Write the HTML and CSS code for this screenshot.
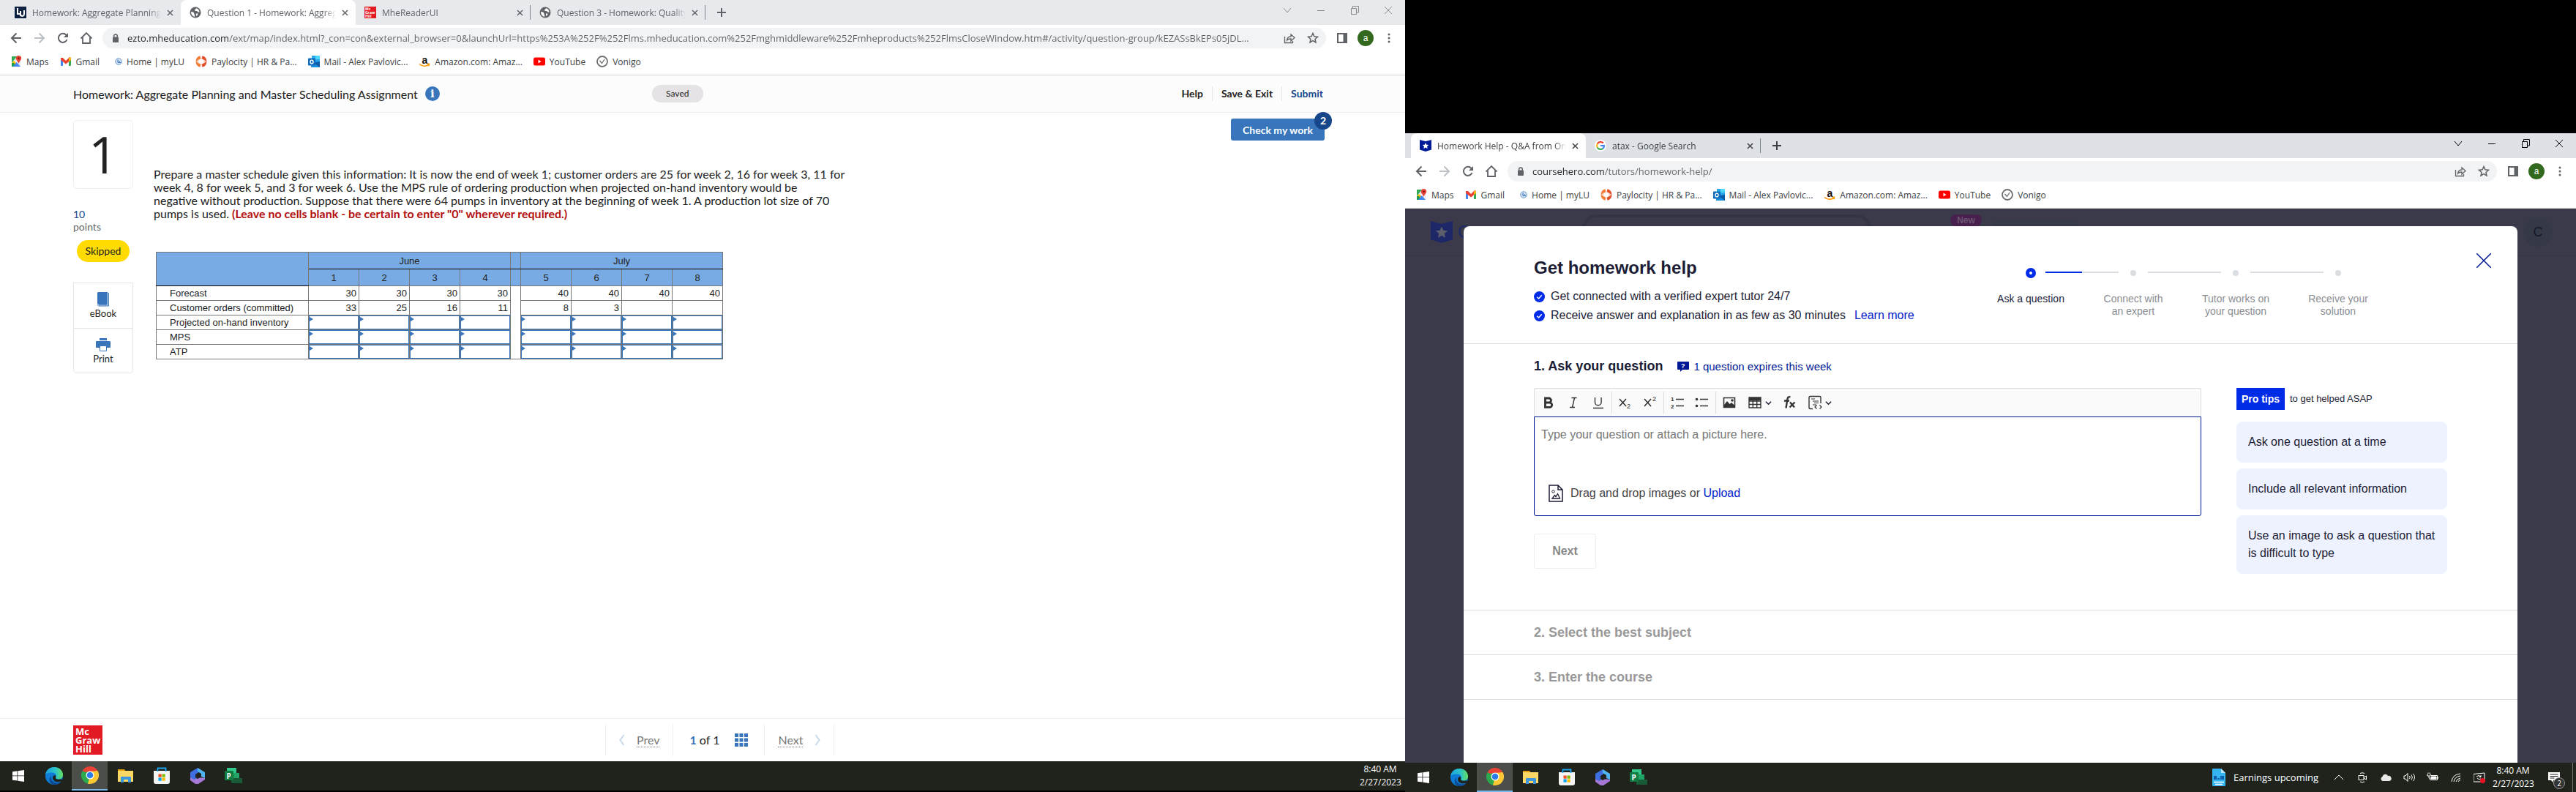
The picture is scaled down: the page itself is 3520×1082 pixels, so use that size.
FILE: index.html
```html
<!DOCTYPE html>
<html lang="en">

<head>
    <meta charset="utf-8">
    <meta name="viewport" content="width=device-width, initial-scale=1.0">
    <title>Desktop</title>
    <link rel="stylesheet" href="styles.css">
</head>

<body>
    <!-- icons used by both screens -->
    <svg class="sprite" aria-hidden="true">
        <symbol id="globe" viewBox="0 0 16 16">
            <circle cx="8" cy="8" r="7.5" fill="#5f6368" />
            <path d="M2.2 7c2.5.2 4.200 1.200 4.200 2.700 0 1.300.8 1.300.8 2.500v1.600C4.300 13.600 1.800 11 2.200 7zM9 2.200c-.2 1.600-1.800 1.200-2 2.600-.1 1.200 1.300 1.200 2.700 1.200 1.200 0 .9 1.600 2.200 1.600h1.700C13.400 4.800 11.500 2.600 9 2.200zM9 9.500h2.500l-.6 2.600-1.900.6z" fill="#fff" />
        </symbol>
        <symbol id="shield" viewBox="0 0 16 16">
            <path d="M0 0l8 2 8-2v13.500L8 16l-8-2.500z" />
            <path d="M8 4l1.300 2.800 3 .3-2.300 2 .7 3L8 10.500l-2.700 1.600.7-3-2.300-2 3-.3z" fill="currentColor" />
        </symbol>
        <symbol id="google" viewBox="0 0 16 16">
            <circle cx="8" cy="8" r="8" fill="#fff" />
            <g fill="none" stroke-width="2.200">
                <path d="M11.800 4.500A5 5 0 0 0 3.700 5.500" stroke="#ea4335" />
                <path d="M3.700 5.500a5 5 0 0 0 0 5" stroke="#fbbc05" />
                <path d="M3.700 10.500a5 5 0 0 0 7.600 1.300" stroke="#34a853" />
                <path d="M11.300 11.800A5 5 0 0 0 13 8H8" stroke="#4285f4" />
            </g>
        </symbol>
        <symbol id="close" viewBox="0 0 10 10">
            <path d="M1 1l8 8M9 1L1 9" fill="none" stroke="currentColor" stroke-width="1.600" />
        </symbol>
        <symbol id="plus" viewBox="0 0 12 12">
            <path d="M6 0v12M0 6h12" fill="none" stroke="currentColor" stroke-width="2" />
        </symbol>
        <symbol id="win-down" viewBox="0 0 12 12">
            <path d="M1 3l5 6 5-6" fill="none" stroke="currentColor" />
        </symbol>
        <symbol id="win-min" viewBox="0 0 12 12">
            <path d="M1 6.500h10" fill="none" stroke="currentColor" />
        </symbol>
        <symbol id="win-max" viewBox="0 0 12 12">
            <path d="M1.500 3.500h7v8h-7zM3.500 3V.5h8v8.500H9" fill="none" stroke="currentColor" />
        </symbol>
        <symbol id="win-close" viewBox="0 0 12 12">
            <path d="M1 1l10 10M11 1L1 11" fill="none" stroke="currentColor" />
        </symbol>
        <symbol id="back" viewBox="0 0 16 16">
            <path d="M15 8H2M8.500 1.500L2 8l6.500 6.500" fill="none" stroke="currentColor" stroke-width="2" />
        </symbol>
        <symbol id="forward" viewBox="0 0 16 16">
            <path d="M1 8h13M7.500 1.500L14 8l-6.500 6.500" fill="none" stroke="currentColor" stroke-width="2" />
        </symbol>
        <symbol id="reload" viewBox="0 0 16 16">
            <path d="M13.500 10A6 6 0 1 1 12.400 3.900L13.500 5" fill="none" stroke="currentColor" stroke-width="2" />
            <path d="M15 1v6H9z" fill="currentColor" />
        </symbol>
        <symbol id="home" viewBox="0 0 16 16">
            <path d="M.5 8.500L8 1l7.500 7.500M3 7v8h10V7" fill="none" stroke="currentColor" stroke-width="1.800" />
        </symbol>
        <symbol id="lock" viewBox="0 0 10 12">
            <rect x="1" y="4.500" width="8" height="7.500" rx="1" fill="currentColor" />
            <path d="M2.700 5V3.300a2.300 2.300 0 0 1 4.600 0V5" fill="none" stroke="currentColor" stroke-width="1.500" />
        </symbol>
        <symbol id="share" viewBox="0 0 16 16">
            <path d="M1.500 6v8.500h11V12M4.500 11c.4-3.500 2.500-5 5.500-5V3l5 4.500-5 4.500V9c-2.500 0-4 .3-5.500 2z" fill="none" stroke="currentColor" stroke-width="1.300" />
        </symbol>
        <symbol id="star" viewBox="0 0 16 16">
            <path d="M8 1.500l1.900 4.300 4.600.5L11 9.400l1 4.600-4-2.400L4 14l1-4.600-3.500-3.100 4.600-.5z" fill="none" stroke="currentColor" stroke-width="1.500" />
        </symbol>
        <symbol id="panel" viewBox="0 0 14 14">
            <path d="M0 0h14v14H0z" fill="currentColor" />
            <path d="M2 2h6.500v10H2z" fill="#fff" />
        </symbol>
        <symbol id="dots" viewBox="0 0 4 14">
            <g fill="currentColor">
                <circle cx="2" cy="2" r="1.500" />
                <circle cx="2" cy="7" r="1.500" />
                <circle cx="2" cy="12" r="1.500" />
            </g>
        </symbol>
        <symbol id="maps" viewBox="0 0 16 16">
            <path d="M2 1h12v14H2z" fill="#e8eaed" />
            <path d="M2 1h7L2 10z" fill="#34a853" />
            <path d="M2 10l3-3 8 8H6z" fill="#fbbc04" />
            <path d="M2 10v5h6l-3-5z" fill="#1a9c4b" />
            <path d="M8.500 9l5.500 6H4z" fill="#4285f4" />
            <path d="M11.500 0a3.700 3.700 0 0 1 3.700 3.700c0 2.500-2.700 3.500-3.700 7.300-1-3.800-3.700-4.800-3.700-7.300A3.700 3.700 0 0 1 11.500 0z" fill="#ea4335" />
            <circle cx="11.500" cy="3.700" r="1.300" fill="#811b12" />
        </symbol>
        <symbol id="gmail" viewBox="0 0 16 16">
            <path d="M1 3h3v11H2a1 1 0 0 1-1-1z" fill="#4285f4" />
            <path d="M12 3h3v10a1 1 0 0 1-1 1h-2z" fill="#34a853" />
            <path d="M1 3l3 0 4 4 4-4 1-1 2 1v3l-7 5.500L1 6z" fill="#ea4335" />
            <path d="M12 3.200L15 2.800V6l-3 2.500z" fill="#fbbc04" />
        </symbol>
        <symbol id="mylu" viewBox="0 0 16 16">
            <circle cx="11" cy="8" r="4.300" fill="#d5e3f3" stroke="#6b98cc" />
            <path d="M10 5.500v4h1.500M12 7v2.500h2" fill="none" stroke="#2c6dba" />
        </symbol>
        <symbol id="paylocity" viewBox="0 0 16 16">
            <g fill="none" stroke-width="4">
                <path d="M7 2.200a6 6 0 0 0 0 11.600" stroke="#f27c3a" />
                <path d="M9 2.200a6 6 0 0 1 0 11.600" stroke="#e2502a" />
            </g>
            <path d="M1 8l4-3v6zM15 8l-4-3v6z" fill="#fff" opacity=".7" />
        </symbol>
        <symbol id="outlook" viewBox="0 0 16 16">
            <path d="M5 0h11v9H5z" fill="#28a8ea" />
            <path d="M10 0h6v5h-6z" fill="#50d9ff" />
            <path d="M4 8h12v8H4z" fill="#1490df" />
            <path d="M16 8v8L8 10z" fill="#0a5ba6" />
            <rect y="3.500" width="10" height="10" rx="1" fill="#0f6cbd" />
            <ellipse cx="5" cy="8.500" rx="2" ry="2.400" fill="none" stroke="#fff" stroke-width="1.400" />
        </symbol>
        <symbol id="smile" viewBox="0 0 16 16">
            <path d="M1 11.500c4 3.500 9.500 3.500 13 .8M11.500 11.500l3-.2-.5 3" fill="none" stroke="#ff9900" stroke-width="1.500" />
        </symbol>
        <symbol id="youtube" viewBox="0 0 16 16">
            <rect y="2.500" width="16" height="11" rx="2.500" fill="#f00" />
            <path d="M6.500 5.500v5l4-2.500z" fill="#fff" />
        </symbol>
        <symbol id="vonigo" viewBox="0 0 16 16">
            <circle cx="8" cy="8" r="7" fill="#fff" stroke="#6d7073" stroke-width="1.800" />
            <path d="M4.500 7l3 3.500L11 5" fill="none" stroke="#6d7073" stroke-width="1.300" />
        </symbol>
        <symbol id="windows" viewBox="0 0 16 16">
            <path d="M0 2.200l6.500-.9v6.200H0zM7.300 1.200L16 0v7.500H7.300zM0 8.300h6.500v6.300L0 13.700zM7.300 8.300H16V16l-8.700-1.200z" fill="#fff" />
        </symbol>
        <symbol id="edge" viewBox="0 0 24 24">
            <defs>
                <linearGradient id="edge-top" x1="0" x2="1">
                    <stop offset="0" stop-color="#1ba1e2" />
                    <stop offset=".6" stop-color="#2fc6c4" />
                    <stop offset="1" stop-color="#66e05a" />
                </linearGradient>
            </defs>
            <circle cx="12" cy="12" r="12" fill="#0e7cd4" />
            <path d="M.2 10C1 4 6 0 12 0c7 0 12 4.800 12 10.500 0 4-3 6-6 6-3.500 0-4.500-1.500-3.800-2.500 1.600-2.500.3-6-4.200-6.500-4-.4-8 .5-9.800 2.500z" fill="url(#edge-top)" />
            <path d="M8 12c-1.500 6 3 9.500 8 9.500 2.500 0 4.500-.8 6-2.500-3 5-9 6-12.500 4.500C5 21.500 4.500 15 8 12z" fill="#0c4a94" />
            <path d="M14.200 14c-.9 2.300 3 3.500 7 2.200l2.800 1.500-3 2c-6 2-11-1-11-5 0-1.500 1-3 2.200-3.700 2 0 2.500 1.500 2 3z" fill="#1f2320" />
        </symbol>
        <symbol id="chrome" viewBox="0 0 24 24">
            <path d="M12 12L1.600 6A12 12 0 0 1 22.400 6z" fill="#ea4335" />
            <path d="M12 12L1.600 6A12 12 0 0 0 12 24l5.200-9z" fill="#2da94f" />
            <path d="M12 12L12 24A12 12 0 0 0 22.400 6H12z" fill="#fcc934" />
            <path d="M12 12l5.200 3L12 24H9z" fill="#fcc934" />
            <path d="M12 6.500L3 8.500l4 6z" fill="#2da94f" />
            <path d="M1.600 6h20.800L12 7z" fill="#ea4335" />
            <circle cx="12" cy="12" r="5.500" fill="#fff" />
            <circle cx="12" cy="12" r="4.300" fill="#2b7de9" />
        </symbol>
        <symbol id="folder" viewBox="0 0 24 24">
            <path d="M1 3h9l2 3H1z" fill="#e3a008" />
            <path d="M1 5h21v15H1z" fill="#fbd765" />
            <path d="M5 21v-7a1 1 0 0 1 1-1h12a1 1 0 0 1 1 1v7h-4v-4H9v4z" fill="#3e97dd" />
        </symbol>
        <symbol id="store" viewBox="0 0 24 24">
            <path d="M1 5h22v15a3 3 0 0 1-3 3H4a3 3 0 0 1-3-3z" fill="#f4f4f4" />
            <path d="M7.500 9.500h4.200v4.200H7.500z" fill="#f25022" />
            <path d="M12.500 9.500h4.200v4.200h-4.200z" fill="#7fba00" />
            <path d="M7.500 14.500h4.200v4.200H7.500z" fill="#00a4ef" />
            <path d="M12.500 14.500h4.200v4.200h-4.200z" fill="#ffb900" />
            <path d="M6.500 6V1.500h11V6" fill="none" stroke="#1ba8f0" stroke-width="1.800" />
        </symbol>
        <symbol id="m365" viewBox="0 0 24 24">
            <path d="M12 1l5 3-5 4v6l-5 4-5-4V7z" fill="#3f6ee0" />
            <path d="M12 1l10 6v8l-5-2V9l-5-3z" fill="#52b4ee" />
            <path d="M2 14l5 3 6-3 9 1v2l-9 6H9l-7-5z" fill="#a678d8" />
            <path d="M12 8l4 3v3l-4 2-3-2v-4z" fill="#1f2320" />
        </symbol>
        <symbol id="project" viewBox="0 0 24 24">
            <path d="M3 1h13v8H3z" fill="#31c78b" />
            <path d="M11 8h9v8h-9z" fill="#21a366" />
            <path d="M9 15h15v7H9z" fill="#185c37" />
            <rect y="5" width="12" height="13" rx="1" fill="#107c41" />
        </symbol>
        <symbol id="check" viewBox="0 0 16 16">
            <circle cx="8" cy="8" r="8" fill="#002be7" />
            <path d="M4.500 8.300l2.500 2.300 4.500-5" fill="none" stroke="#fff" stroke-width="1.600" />
        </symbol>
        <symbol id="chevron" viewBox="0 0 10 10">
            <path d="M1 3l4 4 4-4" fill="none" stroke="currentColor" stroke-width="1.600" />
        </symbol>
    </svg>

    <section class="screen screen-left">
        <div class="tabs">
            <div class="tab">
                <svg class="icon" viewBox="0 0 16 16">
                    <path d="M0 0h16v16H0z" fill="#0d2240" />
                    <path d="M4 2v8h4M8 6v6c4 2 5 0 5-2V5" fill="none" stroke="#fff" stroke-width="2" />
                </svg>
                <span class="tab-title">Homework: Aggregate Planning and</span>
                <button class="tab-close" aria-label="Close tab"><svg><use href="#close" /></svg></button>
            </div>
            <div class="tab active">
                <svg class="icon"><use href="#globe" /></svg>
                <span class="tab-title">Question 1 - Homework: Aggregate</span>
                <button class="tab-close" aria-label="Close tab"><svg><use href="#close" /></svg></button>
            </div>
            <div class="tab line">
                <svg class="icon" viewBox="0 0 16 16">
                    <path d="M0 0h16v16H0z" fill="#e21a23" />
                    <g fill="#fff" font-size="5" font-weight="700">
                        <text x="1" y="5">Mc</text>
                        <text x="1" y="10">Graw</text>
                        <text x="1" y="15">Hill</text>
                    </g>
                </svg>
                <span class="tab-title">MheReaderUI</span>
                <button class="tab-close" aria-label="Close tab"><svg><use href="#close" /></svg></button>
            </div>
            <div class="tab line">
                <svg class="icon"><use href="#globe" /></svg>
                <span class="tab-title">Question 3 - Homework: Quality</span>
                <button class="tab-close" aria-label="Close tab"><svg><use href="#close" /></svg></button>
            </div>
            <button class="new-tab" aria-label="New tab"><svg><use href="#plus" /></svg></button>
            <div class="window-buttons">
                <button aria-label="Search tabs"><svg><use href="#win-down" /></svg></button>
                <button aria-label="Minimize"><svg><use href="#win-min" /></svg></button>
                <button aria-label="Restore"><svg><use href="#win-max" /></svg></button>
                <button aria-label="Close"><svg><use href="#win-close" /></svg></button>
            </div>
        </div>
        <div class="toolbar">
            <button aria-label="Back"><svg><use href="#back" /></svg></button>
            <button class="faded" aria-label="Forward"><svg><use href="#forward" /></svg></button>
            <button aria-label="Reload"><svg><use href="#reload" /></svg></button>
            <button aria-label="Home"><svg><use href="#home" /></svg></button>
            <div class="address">
                <svg class="lock"><use href="#lock" /></svg>
                <input class="url url-long" aria-label="Address" value="ezto.mheducation.com/ext/map/index.html?_con=con&amp;external_browser=0&amp;launchUrl=https%253A%252F%252Flms.mheducation.com%252Fmghmiddleware%252Fmheproducts%252FlmsCloseWindow.htm#/activity/question-group/kEZASsBkEPs05jDL...">
                <button aria-label="Share"><svg><use href="#share" /></svg></button>
                <button aria-label="Bookmark"><svg><use href="#star" /></svg></button>
            </div>
            <button aria-label="Side panel"><svg class="panel"><use href="#panel" /></svg></button>
            <button class="avatar">a</button>
            <button aria-label="Menu"><svg class="dots"><use href="#dots" /></svg></button>
        </div>
        <nav class="bookmarks">
            <a href="#"><svg class="icon"><use href="#maps" /></svg>Maps</a>
            <a href="#"><svg class="icon"><use href="#gmail" /></svg>Gmail</a>
            <a href="#"><svg class="icon"><use href="#mylu" /></svg>Home | myLU</a>
            <a href="#"><svg class="icon"><use href="#paylocity" /></svg>Paylocity | HR &amp; Pa...</a>
            <a href="#"><svg class="icon"><use href="#outlook" /></svg>Mail - Alex Pavlovic...</a>
            <a href="#"><span class="amazon"><svg class="icon"><use href="#smile" /></svg><b>a</b></span>Amazon.com: Amaz...</a>
            <a href="#"><svg class="icon"><use href="#youtube" /></svg>YouTube</a>
            <a href="#"><svg class="icon"><use href="#vonigo" /></svg>Vonigo</a>
        </nav>

        <header class="hw-header">
            <h1>Homework: Aggregate Planning and Master Scheduling Assignment</h1>
            <button class="info" aria-label="Info">i</button>
            <span class="saved">Saved</span>
            <nav class="hw-nav">
                <a href="#">Help</a>
                <a href="#">Save &amp; Exit</a>
                <a href="#" class="submit">Submit</a>
            </nav>
        </header>

        <main class="question">
            <aside class="side">
                <div class="number">1</div>
                <p class="points"><span>10</span><br>points</p>
                <p class="skipped">Skipped</p>
                <div class="tools">
                    <a href="#">
                        <svg viewBox="0 0 18 20">
                            <path d="M2 0h13v16H2.500A1.500 1.500 0 0 0 1 17V1z" fill="#3875bb" />
                            <path d="M16.500 1v18H2.500a1.500 1.500 0 0 1 0-2.500H15M3 17.800h12" fill="none" stroke="#3875bb" />
                        </svg>
                        eBook
                    </a>
                    <a href="#">
                        <svg viewBox="0 0 20 20">
                            <path d="M5 1h10v3H5zM1 5h18a1 1 0 0 1 1 1v8H0V6a1 1 0 0 1 1-1z" fill="#3875bb" />
                            <path d="M5.500 11.500h9v7h-9z" fill="#fff" stroke="#3875bb" />
                        </svg>
                        Print
                    </a>
                </div>
            </aside>
            <div class="question-body">
                <p>Prepare a master schedule given this information: It is now the end of week 1; customer orders are 25 for week 2, 16 for week 3, 11 for<br>
                    week 4, 8 for week 5, and 3 for week 6. Use the MPS rule of ordering production when projected on-hand inventory would be<br>
                    negative without production. Suppose that there were 64 pumps in inventory at the beginning of week 1. A production lot size of 70<br>
                    pumps is used. <strong>(Leave no cells blank - be certain to enter "0" wherever required.)</strong></p>
                <table class="schedule">
                    <thead>
                        <tr class="months">
                            <th rowspan="2" class="label-col"></th>
                            <th colspan="4">June</th>
                            <th class="gap-col"></th>
                            <th colspan="4">July</th>
                        </tr>
                        <tr>
                            <th>1</th><th>2</th><th>3</th><th>4</th>
                            <th class="gap-col"></th>
                            <th>5</th><th>6</th><th>7</th><th>8</th>
                        </tr>
                    </thead>
                    <tbody>
                        <tr>
                            <th>Forecast</th>
                            <td>30</td><td>30</td><td>30</td><td>30</td>
                            <td rowspan="5"></td>
                            <td>40</td><td>40</td><td>40</td><td>40</td>
                        </tr>
                        <tr>
                            <th>Customer orders (committed)</th>
                            <td>33</td><td>25</td><td>16</td><td>11</td>
                            <td>8</td><td>3</td><td></td><td></td>
                        </tr>
                        <tr>
                            <th>Projected on-hand inventory</th>
                            <td class="entry"><input aria-label="Inventory week 1"></td>
                            <td class="entry"><input aria-label="Inventory week 2"></td>
                            <td class="entry"><input aria-label="Inventory week 3"></td>
                            <td class="entry"><input aria-label="Inventory week 4"></td>
                            <td class="entry"><input aria-label="Inventory week 5"></td>
                            <td class="entry"><input aria-label="Inventory week 6"></td>
                            <td class="entry"><input aria-label="Inventory week 7"></td>
                            <td class="entry"><input aria-label="Inventory week 8"></td>
                        </tr>
                        <tr>
                            <th>MPS</th>
                            <td class="entry"><input aria-label="MPS week 1"></td>
                            <td class="entry"><input aria-label="MPS week 2"></td>
                            <td class="entry"><input aria-label="MPS week 3"></td>
                            <td class="entry"><input aria-label="MPS week 4"></td>
                            <td class="entry"><input aria-label="MPS week 5"></td>
                            <td class="entry"><input aria-label="MPS week 6"></td>
                            <td class="entry"><input aria-label="MPS week 7"></td>
                            <td class="entry"><input aria-label="MPS week 8"></td>
                        </tr>
                        <tr>
                            <th>ATP</th>
                            <td class="entry"><input aria-label="ATP week 1"></td>
                            <td class="entry"><input aria-label="ATP week 2"></td>
                            <td class="entry"><input aria-label="ATP week 3"></td>
                            <td class="entry"><input aria-label="ATP week 4"></td>
                            <td class="entry"><input aria-label="ATP week 5"></td>
                            <td class="entry"><input aria-label="ATP week 6"></td>
                            <td class="entry"><input aria-label="ATP week 7"></td>
                            <td class="entry"><input aria-label="ATP week 8"></td>
                        </tr>
                    </tbody>
                </table>
            </div>
            <div class="check">
                <button>Check my work</button>
                <span class="badge">2</span>
            </div>
        </main>

        <footer class="pager">
            <div class="mgh">Mc<br>Graw<br>Hill</div>
            <div class="pages">
                <a href="#">
                    <svg class="arrow" viewBox="0 0 8 16"><path d="M6.500 1L1.500 8l5 7" /></svg>
                    <span>Prev</span>
                </a>
                <div class="count">
                    <span><b>1</b> of 1</span>
                    <button class="grid-button" aria-label="All questions">
                        <svg viewBox="0 0 18 18">
                            <path d="M0 0h5v5H0zM6.500 0h5v5h-5zM13 0h5v5h-5zM0 6.500h5v5H0zM6.500 6.500h5v5h-5zM13 6.500h5v5h-5zM0 13h5v5H0zM6.500 13h5v5h-5zM13 13h5v5h-5z" fill="#3875bb" />
                        </svg>
                    </button>
                </div>
                <a href="#">
                    <span>Next</span>
                    <svg class="arrow" viewBox="0 0 8 16"><path d="M1.500 1l5 7-5 7" /></svg>
                </a>
            </div>
        </footer>

        <div class="taskbar">
            <button aria-label="Start"><svg class="start"><use href="#windows" /></svg></button>
            <button aria-label="Edge"><svg><use href="#edge" /></svg></button>
            <button class="running" aria-label="Chrome"><svg><use href="#chrome" /></svg></button>
            <button aria-label="File Explorer"><svg><use href="#folder" /></svg></button>
            <button aria-label="Store"><svg><use href="#store" /></svg></button>
            <button aria-label="Microsoft 365"><svg><use href="#m365" /></svg></button>
            <button class="project" aria-label="Project"><svg><use href="#project" /></svg><b>P</b></button>
            <div class="tray">
                <time class="clock">8:40 AM<br>2/27/2023</time>
            </div>
        </div>
    </section>

    <section class="screen screen-right">
        <div class="tabs">
            <div class="tab active">
                <svg class="icon hero-icon"><use href="#shield" /></svg>
                <span class="tab-title">Homework Help - Q&amp;A from Online</span>
                <button class="tab-close" aria-label="Close tab"><svg><use href="#close" /></svg></button>
            </div>
            <div class="tab line">
                <svg class="icon"><use href="#google" /></svg>
                <span class="tab-title">atax - Google Search</span>
                <button class="tab-close" aria-label="Close tab"><svg><use href="#close" /></svg></button>
            </div>
            <button class="new-tab" aria-label="New tab"><svg><use href="#plus" /></svg></button>
            <div class="window-buttons">
                <button aria-label="Search tabs"><svg><use href="#win-down" /></svg></button>
                <button aria-label="Minimize"><svg><use href="#win-min" /></svg></button>
                <button aria-label="Restore"><svg><use href="#win-max" /></svg></button>
                <button aria-label="Close"><svg><use href="#win-close" /></svg></button>
            </div>
        </div>
        <div class="toolbar">
            <button aria-label="Back"><svg><use href="#back" /></svg></button>
            <button class="faded" aria-label="Forward"><svg><use href="#forward" /></svg></button>
            <button aria-label="Reload"><svg><use href="#reload" /></svg></button>
            <button aria-label="Home"><svg><use href="#home" /></svg></button>
            <div class="address">
                <svg class="lock"><use href="#lock" /></svg>
                <input class="url url-short" aria-label="Address" value="coursehero.com/tutors/homework-help/">
                <button aria-label="Share"><svg><use href="#share" /></svg></button>
                <button aria-label="Bookmark"><svg><use href="#star" /></svg></button>
            </div>
            <button aria-label="Side panel"><svg class="panel"><use href="#panel" /></svg></button>
            <button class="avatar">a</button>
            <button aria-label="Menu"><svg class="dots"><use href="#dots" /></svg></button>
        </div>
        <nav class="bookmarks">
            <a href="#"><svg class="icon"><use href="#maps" /></svg>Maps</a>
            <a href="#"><svg class="icon"><use href="#gmail" /></svg>Gmail</a>
            <a href="#"><svg class="icon"><use href="#mylu" /></svg>Home | myLU</a>
            <a href="#"><svg class="icon"><use href="#paylocity" /></svg>Paylocity | HR &amp; Pa...</a>
            <a href="#"><svg class="icon"><use href="#outlook" /></svg>Mail - Alex Pavlovic...</a>
            <a href="#"><span class="amazon"><svg class="icon"><use href="#smile" /></svg><b>a</b></span>Amazon.com: Amaz...</a>
            <a href="#"><svg class="icon"><use href="#youtube" /></svg>YouTube</a>
            <a href="#"><svg class="icon"><use href="#vonigo" /></svg>Vonigo</a>
        </nav>

        <div class="hero-page">
            <header class="hero-header">
                <svg class="hero-logo"><use href="#shield" /></svg>
                <span class="hero-name">C</span>
                <div class="hero-search"></div>
                <span class="hero-new">New</span>
                <div class="hero-box"></div>
                <span class="hero-user">C</span>
            </header>

            <div class="modal">
                <header class="modal-header">
                    <div class="intro">
                        <h2>Get homework help</h2>
                        <p><svg><use href="#check" /></svg>Get connected with a verified expert tutor 24/7</p>
                        <p><svg><use href="#check" /></svg>Receive answer and explanation in as few as 30 minutes <a href="#">Learn more</a></p>
                    </div>
                    <ol class="steps">
                        <li class="current">Ask a question</li>
                        <li>Connect with an expert</li>
                        <li>Tutor works on your question</li>
                        <li>Receive your solution</li>
                    </ol>
                    <button class="modal-close" aria-label="Close">
                        <svg viewBox="0 0 20 20"><path d="M0 0l20 20M20 0L0 20" fill="none" stroke="#001a96" stroke-width="1.500" /></svg>
                    </button>
                </header>

                <div class="ask">
                    <div class="ask-main">
                        <div class="ask-title">
                            <h3>1. Ask your question</h3>
                            <span class="expires">
                                <svg viewBox="0 0 16 14">
                                    <path d="M1 0h14a1 1 0 0 1 1 1v9a1 1 0 0 1-1 1H7l-3 3v-3H1a1 1 0 0 1-1-1V1a1 1 0 0 1 1-1z" fill="#001a96" />
                                    <text x="5" y="9" font-size="9" font-weight="700" fill="#fff">?</text>
                                </svg>
                                1 question expires this week
                            </span>
                        </div>
                        <div class="editor-tools">
                            <button aria-label="Bold"><svg viewBox="0 0 20 20"><path d="M5.500 4h5a3 3 0 0 1 0 6h-5zM5.500 10h6a3.200 3.200 0 0 1 0 6.400h-6z" fill="none" stroke="#333" stroke-width="2.800" /></svg></button>
                            <button aria-label="Italic"><svg viewBox="0 0 20 20"><path d="M7.500 3.500h7M5 16.500h7M11.500 3.500l-3 13" fill="none" stroke="#333" stroke-width="1.400" /></svg></button>
                            <button aria-label="Underline"><svg viewBox="0 0 20 20"><path d="M5.500 3v6.500a4.300 4.300 0 0 0 8.600 0V3M3 17.500h14" fill="none" stroke="#333" stroke-width="1.400" /></svg></button>
                            <i></i>
                            <button aria-label="Subscript"><svg viewBox="0 0 20 20"><path d="M2 5l9 10M11 5L2 15" fill="none" stroke="#333" stroke-width="1.600" /><text x="12" y="18" font-size="9" fill="#333">2</text></svg></button>
                            <button aria-label="Superscript"><svg viewBox="0 0 20 20"><path d="M2 5l9 10M11 5L2 15" fill="none" stroke="#333" stroke-width="1.600" /><text x="13" y="8" font-size="9" fill="#333">2</text></svg></button>
                            <i></i>
                            <button aria-label="Numbered list"><svg viewBox="0 0 20 20"><path d="M8 5.500h11M8 14.500h11" stroke="#333" stroke-width="1.400" /><text x="1" y="8" font-size="8" font-weight="700" fill="#333">1</text><text x="1" y="18" font-size="8" font-weight="700" fill="#333">2</text></svg></button>
                            <button aria-label="Bulleted list"><svg viewBox="0 0 20 20"><path d="M7 5.500h11M7 14.500h11" stroke="#333" stroke-width="1.400" /><circle cx="2.500" cy="5.500" r="1.800" fill="#333" /><circle cx="2.500" cy="14.500" r="1.800" fill="#333" /></svg></button>
                            <i></i>
                            <button aria-label="Image"><svg viewBox="0 0 20 20"><path d="M2.500 3.500h15v13h-15z" fill="none" stroke="#333" stroke-width="1.600" /><path d="M3 16v-3l4-5 3.500 4 2.500-2 4 3.500V16z" fill="#333" /><circle cx="14" cy="7" r="1.800" fill="#333" /></svg></button>
                            <button class="with-menu" aria-label="Table"><svg viewBox="0 0 20 20"><path d="M2 3h16v14H2zM2 8h16M2 12.500h16M7.300 7v10M12.700 7v10" fill="none" stroke="#333" stroke-width="1.400" /><path d="M2 3h16v4H2z" fill="#333" /></svg><svg class="menu"><use href="#chevron" /></svg></button>
                            <button aria-label="Formula"><svg viewBox="0 0 20 20"><path d="M11.500 2.500C8 1 7.500 4 7 8l-1.500 9.500M3 7.500h7" fill="none" stroke="#333" stroke-width="2.400" /><path d="M11 9.500l6 7M17.500 9.500l-7 7" fill="none" stroke="#333" stroke-width="2.400" /></svg></button>
                            <button class="with-menu" aria-label="Code"><svg viewBox="0 0 20 20"><path d="M7 18.500H3.500a1.500 1.500 0 0 1-1.500-1.500V3a1.500 1.500 0 0 1 1.500-1.500h13A1.500 1.500 0 0 1 18 3v8" fill="none" stroke="#333" stroke-width="1.400" /><path d="M5 5h5M7 8h8M9 10.500h6M7 13h5M12.500 13.500l-2.500 2.500 2.500 2.500M16.500 13.500l2.500 2.500-2.500 2.500" fill="none" stroke="#333" stroke-width="1.200" /></svg><svg class="menu"><use href="#chevron" /></svg></button>
                        </div>
                        <div class="editor">
                            <textarea aria-label="Your question" placeholder="Type your question or attach a picture here."></textarea>
                            <div class="drop">
                                <svg viewBox="0 0 20 24">
                                    <path d="M1 1h12l6 6v16H1zM13 1v6h6" fill="none" stroke="#1c1d35" stroke-width="1.500" />
                                    <circle cx="6.500" cy="9.500" r="1.700" fill="none" stroke="#1c1d35" />
                                    <path d="M5 19l3.500-4.500 1.500 2 2.500-4L15.500 19z" fill="none" stroke="#1c1d35" stroke-width="1.300" />
                                </svg>
                                <span>Drag and drop images or <a href="#">Upload</a></span>
                            </div>
                        </div>
                        <button class="next" disabled>Next</button>
                    </div>
                    <aside class="tips">
                        <p class="tips-title"><b>Pro tips</b> to get helped ASAP</p>
                        <p class="tip">Ask one question at a time</p>
                        <p class="tip">Include all relevant information</p>
                        <p class="tip">Use an image to ask a question that is difficult to type</p>
                    </aside>
                </div>
                <h3 class="later">2. Select the best subject</h3>
                <h3 class="later">3. Enter the course</h3>
            </div>
        </div>

        <div class="taskbar">
            <button aria-label="Start"><svg class="start"><use href="#windows" /></svg></button>
            <button aria-label="Edge"><svg><use href="#edge" /></svg></button>
            <button class="running" aria-label="Chrome"><svg><use href="#chrome" /></svg></button>
            <button aria-label="File Explorer"><svg><use href="#folder" /></svg></button>
            <button aria-label="Store"><svg><use href="#store" /></svg></button>
            <button aria-label="Microsoft 365"><svg><use href="#m365" /></svg></button>
            <button class="project" aria-label="Project"><svg><use href="#project" /></svg><b>P</b></button>
            <div class="tray">
                <button class="news">
                    <svg viewBox="0 0 18 24">
                        <path d="M1 0h11l6 6v17a1 1 0 0 1-1 1H1a1 1 0 0 1-1-1V1a1 1 0 0 1 1-1z" fill="#35b4f2" />
                        <path d="M12 0l6 6h-6z" fill="#b8e6fb" />
                        <path d="M2 10h4v5H2zM7 13h3v2H7zM11 10h5v5h-5z" fill="#0f5fae" />
                        <path d="M2 18.500h14M4 21.500h10" stroke="#fff" stroke-width="1.500" />
                    </svg>
                    Earnings upcoming
                </button>
                <button aria-label="Hidden icons"><svg viewBox="0 0 16 16"><path d="M2 11l6-6 6 6" /></svg></button>
                <button aria-label="Meet now"><svg viewBox="0 0 16 16"><path d="M3 5.500h7v6H3zM10 8l3.500-2v5L10 9M5 2.500q3-1.500 6 0M5 14q3 1.500 6 0" /></svg></button>
                <button aria-label="OneDrive"><svg viewBox="0 0 16 16"><path d="M3.500 13a3.200 3.200 0 0 1 0-6A4 4 0 0 1 11 6a3.600 3.600 0 0 1 2 7z" fill="#e8e8e8" stroke="none" /></svg></button>
                <button aria-label="Volume"><svg viewBox="0 0 16 16"><path d="M1 6h2l3-3.500v11L3 10H1zM8.500 6q1.500 2 0 4M11 4.500q2.800 3.500 0 7M13.500 3q4 5 0 10" /></svg></button>
                <button aria-label="Battery"><svg viewBox="0 0 16 16"><path d="M6 5.500h8.500v6H4.500V9M15.500 7.500v2M1 3v3h4V3M3 6v3h2M2 3V1.500M4 3V1.500" /><path d="M6 7h7v3H6z" fill="#fff" /></svg></button>
                <button aria-label="Wi-Fi"><svg viewBox="0 0 16 16"><path d="M2 14Q3 4 14 3M5 14q1-7 9-8M8 14q1-4 6-5M11 14q.5-2 3-2.500" /></svg></button>
                <button aria-label="Update"><svg viewBox="0 0 16 16"><path d="M0 3.500L15 2v12H0zM4 7q3-3 6 0M10 5v2.500H7.500M10 10q-3 2-5-1" /><circle cx="12.500" cy="12.500" r="3.500" fill="#e81123" stroke="none" /></svg></button>
                <time class="clock">8:40 AM<br>2/27/2023</time>
                <button class="notes" aria-label="Notifications">
                    <svg viewBox="0 0 16 16"><path d="M0 1h16v11H7v3l-3-3H0z" fill="#fff" stroke="none" /><path d="M2.500 4h11M2.500 6.500h11M2.500 9h6" stroke="#222" /></svg>
                    <span>2</span>
                </button>
            </div>
        </div>
    </section>
</body>

</html>
```

FILE: styles.css
```css
*,
*::before,
*::after {
    padding: 0;
    margin: 0;
    box-sizing: border-box;
}

body {
    display: flex;
    height: 100vh;
    background-color: black;
    font-family: "Liberation Sans", Arial, sans-serif;
    color: #222;
    overflow: hidden;
}

button {
    border: none;
    background: none;
    font: inherit;
    color: inherit;
}

a {
    color: inherit;
    text-decoration: none;
}

svg {
    display: block;
    flex-shrink: 0;
}

.sprite {
    position: absolute;
    width: 0;
    height: 0;
}

.screen {
    display: flex;
    flex-direction: column;
    min-width: 0;
}

.screen-left {
    flex: 6;
    margin-bottom: 2px;
    background-color: white;
}

.screen-right {
    flex: 5;
    margin-top: 182px;
    background-color: white;
}

/* browser */

.tabs {
    display: flex;
    align-items: center;
    height: 34px;
    padding-left: 8px;
    background-color: #e8e9ed;
    color: #5f6368;
    font: 12px "Open Sans", "Noto Sans", sans-serif;
}

.screen-right .tabs {
    background-color: #dee1e6;
    color: #3c4043;
}

.tab {
    display: flex;
    align-items: center;
    gap: 8px;
    width: 239px;
    height: 34px;
    padding: 0 10px 0 12px;
}

.tab.active {
    background-color: white;
    border-radius: 8px 8px 0 0;
}

.tab.line {
    background: linear-gradient(#80868b, #80868b) right center / 1px 20px no-repeat;
}

.icon {
    width: 16px;
    height: 16px;
}

.hero-icon {
    fill: #001a96;
    color: white;
}

.tab-title {
    flex: 1;
    overflow: hidden;
    white-space: nowrap;
    -webkit-mask-image: linear-gradient(to left, transparent, black 16px);
    mask-image: linear-gradient(to left, transparent, black 16px);
}

.tab-close svg {
    width: 9px;
    height: 9px;
}

.new-tab {
    margin-left: 16px;
}

.new-tab svg {
    width: 12px;
    height: 12px;
}

.window-buttons {
    display: flex;
    margin-left: auto;
    align-self: flex-start;
    color: #8a8b8d;
}

.screen-right .window-buttons {
    color: black;
}

.window-buttons button {
    display: flex;
    justify-content: center;
    align-items: center;
    width: 46px;
    height: 28px;
}

.window-buttons svg {
    width: 12px;
    height: 12px;
}

.toolbar {
    display: flex;
    align-items: center;
    padding: 4px 6px;
    color: #5f6368;
}

.toolbar button {
    display: flex;
    justify-content: center;
    align-items: center;
    width: 32px;
    height: 28px;
}

.toolbar svg {
    width: 16px;
    height: 16px;
}

.toolbar .faded {
    color: #bdc1c6;
}

.address {
    display: flex;
    align-items: center;
    flex: 1;
    height: 28px;
    margin: 0 6px;
    padding: 0 2px 0 12px;
    border-radius: 14px;
    background-color: #f1f3f4;
}

.toolbar .lock {
    width: 12px;
    height: 12px;
}

.url {
    flex: 1;
    min-width: 0;
    height: 28px;
    margin-left: 10px;
    border: none;
    outline: none;
    color: #5f6368;
    font: 13px "Open Sans", "Noto Sans", sans-serif;
    -webkit-text-fill-color: transparent;
}

/* domain dark, path grey */
.url-long {
    background: linear-gradient(to right, #202124 139px, #5f6368 139px);
    background-clip: text;
    -webkit-background-clip: text;
}

.url-short {
    background: linear-gradient(to right, #202124 98px, #5f6368 98px);
    background-clip: text;
    -webkit-background-clip: text;
}

.toolbar .panel {
    width: 14px;
    height: 14px;
}

.toolbar .dots {
    width: 4px;
    height: 14px;
}

.toolbar .avatar {
    width: 22px;
    height: 22px;
    margin: 0 5px;
    border-radius: 50%;
    background-color: #33691e;
    color: white;
    font-size: 12px;
}

.bookmarks {
    display: flex;
    align-items: center;
    gap: 15px;
    height: 33px;
    padding: 0 14px 4px;
    border-bottom: 1px solid #d5d6d8;
    color: #3c4043;
    font: 12px "Open Sans", "Noto Sans", sans-serif;
    white-space: nowrap;
}

.bookmarks a {
    display: flex;
    align-items: center;
    gap: 6px;
}

/* letter sits on the icon */
.amazon {
    display: grid;
    color: #111;
    font: 14px/12px "Liberation Sans", Arial, sans-serif;
    text-align: center;
}

.amazon > * {
    grid-area: 1 / 1;
}

/* homework */

.hw-header {
    display: flex;
    align-items: center;
    height: 51px;
    padding: 0 112px 0 100px;
    border-bottom: 1px solid #eee;
    background-color: #fcfcfc;
    font-family: Lato, sans-serif;
}

.hw-header h1 {
    font-size: 16px;
    font-weight: 400;
}

.info {
    width: 20px;
    height: 20px;
    margin-left: 10px;
    border-radius: 50%;
    background-color: #3875bb;
    color: white;
    font: bold 15px "DejaVu Serif", serif;
}

.saved {
    width: 70px;
    margin-left: 290px;
    border-radius: 12px;
    background-color: #e5e3e5;
    font-size: 12px;
    line-height: 24px;
    text-align: center;
}

.hw-nav {
    display: flex;
    margin-left: auto;
    font-size: 14px;
    font-weight: 700;
    line-height: 20px;
}

.hw-nav a + a {
    margin-left: 12px;
    padding-left: 12px;
    border-left: 1px solid #e5e5e5;
}

.hw-nav .submit {
    color: #17478a;
}

.question {
    display: flex;
    flex: 1;
    min-height: 0;
    padding: 10px 110px 0 100px;
    font-family: Lato, sans-serif;
}

.side {
    width: 82px;
}

.number {
    height: 94px;
    border: 1px solid #eee;
    border-radius: 5px;
    font: 70px/90px "Open Sans", sans-serif;
    text-align: center;
}

.points {
    margin-top: 26px;
    color: #666;
    font-size: 14px;
    line-height: 17px;
}

.points span {
    color: #17478a;
}

.skipped {
    margin: 10px 5px 28px;
    border-radius: 15px;
    background-color: #ffdb00;
    font-size: 14px;
    line-height: 30px;
    text-align: center;
}

.tools {
    border: 1px solid #e5e5e5;
    border-radius: 0 0 5px 5px;
}

.tools a {
    display: flex;
    flex-direction: column;
    align-items: center;
    gap: 1px;
    height: 61px;
    padding-top: 12px;
    font-size: 13px;
}

.tools a + a {
    border-top: 1px solid #e5e5e5;
}

.tools svg {
    width: 20px;
    height: 20px;
}

.question-body {
    flex: 1;
    padding: 65px 0 0 28px;
    font-size: 16px;
    line-height: 18px;
    white-space: nowrap;
}

.question-body strong {
    color: #b30f0f;
}

.schedule {
    margin: 43px 0 0 3px;
    border-collapse: collapse;
    table-layout: fixed;
    width: 775px;
    font: 13px "Liberation Sans", Arial, sans-serif;
}

.schedule th,
.schedule td {
    height: 20px;
    border: 1px solid #767676;
    font-weight: 400;
}

.schedule thead th {
    height: 23px;
    background-color: #78abe4;
    text-align: center;
}

.schedule .months th {
    border-bottom-color: black;
}

.schedule .label-col {
    width: 208px;
}

.schedule .gap-col {
    width: 14px;
}

.schedule tbody th {
    padding-left: 18px;
    text-align: left;
}

.schedule td {
    padding-right: 3px;
    text-align: right;
}

.schedule .entry {
    position: relative;
    padding: 0;
}

.entry input {
    display: block;
    width: 100%;
    height: 19px;
    border: 1px solid #3875bb;
    outline: none;
}

.entry::before {
    content: "";
    position: absolute;
    top: 2px;
    left: 1px;
    border: 3px solid transparent;
    border-left: 5px solid #3875bb;
}

.check {
    position: relative;
    align-self: flex-start;
    margin-top: -2px;
}

.check button {
    width: 128px;
    height: 30px;
    border-radius: 3px;
    background-color: #3875bb;
    color: white;
    font-size: 14px;
    font-weight: 700;
}

.badge {
    position: absolute;
    top: -9px;
    right: -10px;
    width: 24px;
    border-radius: 12px;
    background-color: #17478a;
    color: white;
    font-size: 14px;
    font-weight: 700;
    line-height: 24px;
    text-align: center;
}

.pager {
    display: flex;
    align-items: center;
    height: 59px;
    padding-left: 100px;
    border-top: 1px solid #eee;
    font-family: Lato, sans-serif;
}

.mgh {
    width: 40px;
    height: 40px;
    padding: 2px 3px;
    background-color: #e21a23;
    color: white;
    font: bold 13px/12px "Open Sans", sans-serif;
}

.pages {
    display: flex;
    margin-left: 687px;
    border-right: 1px solid #eee;
    line-height: 44px;
}

.pages > * {
    display: flex;
    align-items: center;
    gap: 16px;
    padding: 0 18px;
    border-left: 1px solid #eee;
}

.pages a {
    color: #777;
    font-size: 16px;
}

.pages a span {
    line-height: 18px;
    border-bottom: 1px dotted #777;
}

.pages b {
    color: #3875bb;
}

.pages .count {
    gap: 21px;
    padding: 0 22px;
    font-size: 16px;
}

.arrow {
    width: 8px;
    height: 16px;
    fill: none;
    stroke: #c9d9ea;
    stroke-width: 2;
}

.grid-button svg {
    width: 18px;
    height: 18px;
}

.taskbar {
    display: flex;
    height: 40px;
    background-color: #1f231c;
    color: white;
    font: 12px "Open Sans", "Noto Sans", sans-serif;
}

.taskbar > button {
    display: flex;
    justify-content: center;
    align-items: center;
    width: 49px;
}

.taskbar > button svg {
    width: 24px;
    height: 24px;
}

.taskbar > button .start {
    width: 16px;
    height: 16px;
}

.taskbar .running {
    background-color: #4c4e4a;
    border-bottom: 2px solid #76b9ed;
}

.taskbar > .project {
    display: grid;
    align-content: center;
}

.project > * {
    grid-area: 1 / 1;
}

.project b {
    padding-left: 3px;
    font-size: 10px;
    line-height: 23px;
    text-align: left;
}

.tray {
    display: flex;
    align-items: center;
    margin-left: auto;
    padding-right: 4px;
}

.tray button {
    display: flex;
    justify-content: center;
    align-items: center;
    width: 32px;
}

.tray button svg {
    width: 16px;
    height: 16px;
    fill: none;
    stroke: white;
}

.tray .news {
    gap: 11px;
    width: auto;
    margin-right: 12px;
    font-size: 13px;
}

.tray .news svg {
    width: 18px;
    height: 24px;
    stroke: none;
}

.clock {
    width: 56px;
    margin: 0 2px;
    line-height: 18px;
    text-align: center;
}

.tray .notes {
    position: relative;
    width: 52px;
    height: 40px;
    border-right: 1px solid #777;
}

.notes span {
    position: absolute;
    top: 20px;
    left: 25px;
    width: 16px;
    border: 1px solid #999;
    border-radius: 8px;
    background-color: #333;
    font-size: 10px;
    line-height: 14px;
    text-align: center;
}

/* course hero */

.hero-page {
    position: relative;
    flex: 1;
    min-height: 0;
    background-color: #3a3a4a;
    color: #1c1d35;
}

.hero-header {
    display: flex;
    height: 65px;
    padding: 0 32px 0 35px;
    border-bottom: 1px solid #363646;
}

.hero-logo {
    width: 30px;
    height: 30px;
    margin-top: 17px;
    fill: #1e2868;
    color: #5d5e6c;
}

.hero-name {
    width: 170px;
    margin: 17px 0 0 7px;
    color: #1e2868;
    font-size: 24px;
    line-height: 30px;
}

.hero-search {
    width: 395px;
    height: 40px;
    margin-top: 8px;
    border: 4px solid #343447;
    border-radius: 20px;
}

.hero-new {
    width: 43px;
    height: 16px;
    margin: 8px 0 0 108px;
    border-radius: 8px;
    background-color: #47204d;
    color: #6b5470;
    font-size: 12px;
    font-weight: 700;
    line-height: 16px;
    text-align: center;
}

.hero-box {
    width: 115px;
    height: 40px;
    margin: 16px 0 0 16px;
    border-radius: 4px;
    background-color: #363947;
}

.hero-user {
    width: 40px;
    height: 40px;
    margin: 12px 0 0 auto;
    border-radius: 50%;
    background-color: #353947;
    color: #15162a;
    font-size: 18px;
    line-height: 40px;
    text-align: center;
}

.modal {
    position: absolute;
    inset: 24px 80px 0;
    border-radius: 8px 8px 0 0;
    background-color: white;
    font-size: 16px;
}

.modal a {
    color: #0020c8;
}

.modal-header {
    display: flex;
    height: 161px;
    padding: 37px 36px 0 96px;
    border-bottom: 1px solid #ddd;
}

.intro {
    flex: 1;
}

.intro h2 {
    margin-bottom: 6px;
    font-size: 24px;
    line-height: 40px;
}

.intro p {
    display: flex;
    align-items: center;
    gap: 8px;
    line-height: 26px;
}

.intro p svg {
    width: 15px;
    height: 15px;
}

.intro a {
    margin-left: 4px;
}

.steps {
    display: flex;
    margin-right: 119px;
    list-style: none;
    color: #8a8d92;
    font-size: 14px;
    line-height: 17px;
    text-align: center;
}

.steps li {
    position: relative;
    width: 140px;
    padding: 54px 20px 0;
}

.steps li::before {
    content: "";
    position: absolute;
    top: 23px;
    left: 66px;
    width: 8px;
    height: 8px;
    border-radius: 50%;
    background-color: #dadde1;
}

.steps li + li::after {
    content: "";
    position: absolute;
    top: 25px;
    left: -50px;
    width: 100px;
    height: 2px;
    background-color: #dadde1;
}

.steps .current + li::after {
    background: linear-gradient(to right, #002be7 50%, #dadde1 50%);
}

.steps .current {
    color: #1c1d35;
    padding-left: 10px;
    padding-right: 10px;
}

.steps .current::before {
    top: 20px;
    left: 63px;
    width: 14px;
    height: 14px;
    border: 5px solid #002be7;
    background-color: white;
}

.modal-close {
    align-self: flex-start;
}

.modal-close svg {
    width: 20px;
    height: 20px;
}

.ask {
    display: flex;
    gap: 48px;
    height: 364px;
    padding: 20px 96px 0;
    border-bottom: 1px solid #ddd;
}

.ask-main {
    flex: 1;
}

.ask-title {
    display: flex;
    align-items: center;
    height: 21px;
    margin-bottom: 19px;
}

.modal h3 {
    font-size: 18px;
}

.expires {
    display: flex;
    align-items: center;
    gap: 6px;
    margin-left: 20px;
    color: #001a96;
    font-size: 15px;
}

.expires svg {
    width: 16px;
    height: 14px;
}

.editor-tools {
    display: flex;
    align-items: center;
    height: 39px;
    padding-left: 2px;
    border: 1px solid #ddd;
    border-bottom: none;
    border-radius: 3px 3px 0 0;
    background-color: #fafafa;
}

.editor-tools button {
    display: flex;
    justify-content: center;
    align-items: center;
    width: 34px;
}

.editor-tools .with-menu {
    gap: 4px;
    width: 48px;
}

.editor-tools svg {
    width: 20px;
    height: 20px;
}

.editor-tools .menu {
    width: 9px;
    height: 9px;
}

.editor-tools i {
    width: 1px;
    height: 30px;
    margin: 0 1px;
    background-color: #ddd;
}

.editor {
    height: 136px;
    border: 1px solid #001a96;
    border-radius: 0 0 3px 3px;
}

.editor textarea {
    display: block;
    width: 100%;
    height: 92px;
    padding: 14px 9px;
    border: none;
    outline: none;
    resize: none;
    font: 16px/20px "Liberation Sans", Arial, sans-serif;
}

.editor textarea::placeholder {
    color: #777;
}

.drop {
    display: flex;
    align-items: center;
    gap: 10px;
    padding-left: 19px;
    color: #444;
}

.drop svg {
    width: 20px;
    height: 24px;
}

.next {
    width: 85px;
    height: 48px;
    margin-top: 24px;
    border: 1px solid #eee;
    border-radius: 3px;
    color: #888;
    font-weight: 700;
}

.tips {
    width: 288px;
    padding-top: 40px;
}

.tips-title {
    display: flex;
    gap: 7px;
    margin-bottom: 16px;
    font-size: 13px;
    line-height: 30px;
}

.tips-title b {
    padding: 0 5px;
    width: 66px;
    background-color: #002be7;
    color: white;
    font-size: 14px;
    text-align: center;
}

.tip {
    margin-bottom: 8px;
    padding: 16px;
    border-radius: 8px;
    background-color: #eef2ff;
    font-size: 16px;
    line-height: 24px;
}

.modal .later {
    padding-left: 96px;
    border-bottom: 1px solid #ddd;
    color: #999;
    line-height: 60px;
}
```
